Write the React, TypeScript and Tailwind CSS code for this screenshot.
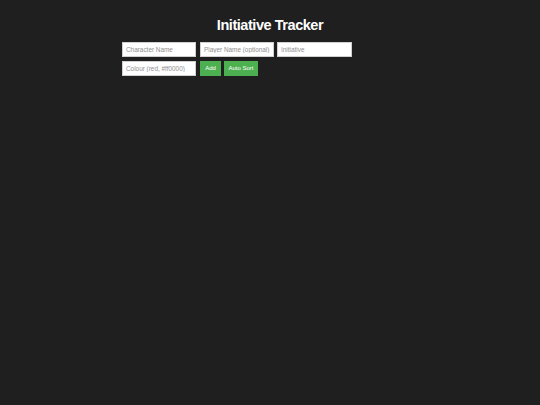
import React from "react";

export default function App() {
  return (
    <div className="min-h-screen w-full bg-[#1f1f1f] pt-[16px]" style={{ fontFamily: '"Liberation Sans", Arial, sans-serif' }}>
      <h1 className="text-center text-[14.5px] leading-[18px] font-bold tracking-[-0.45px] text-white">Initiative Tracker</h1>
      <div className="mx-auto mt-[8px] flex w-[296px] flex-wrap gap-[4px]">
        <input className="h-[15px] w-[74px] border border-[#d0d0d0] bg-white px-[3px] text-[6.4px] text-black outline-none placeholder:text-[#909090]" placeholder="Character Name" />
        <input className="h-[15px] w-[74px] border border-[#d0d0d0] bg-white px-[3px] text-[6.4px] text-black outline-none placeholder:text-[#909090]" placeholder="Player Name (optional)" />
        <input className="ml-[-1px] h-[15px] w-[75px] border border-[#d0d0d0] bg-white px-[3px] text-[6.4px] text-black outline-none placeholder:text-[#909090]" placeholder="Initiative" />
        <input className="h-[15px] w-[74px] border border-[#d0d0d0] bg-white px-[3px] text-[6.4px] text-black outline-none placeholder:text-[#909090]" placeholder="Colour (red, #ff0000)" />
        <button className="h-[15px] w-[21px] bg-[#4caf50] text-[6px] text-white">Add</button>
        <button className="ml-[-1px] h-[15px] w-[34px] bg-[#4caf50] text-[6px] text-white">Auto Sort</button>
      </div>
    </div>
  );
}
